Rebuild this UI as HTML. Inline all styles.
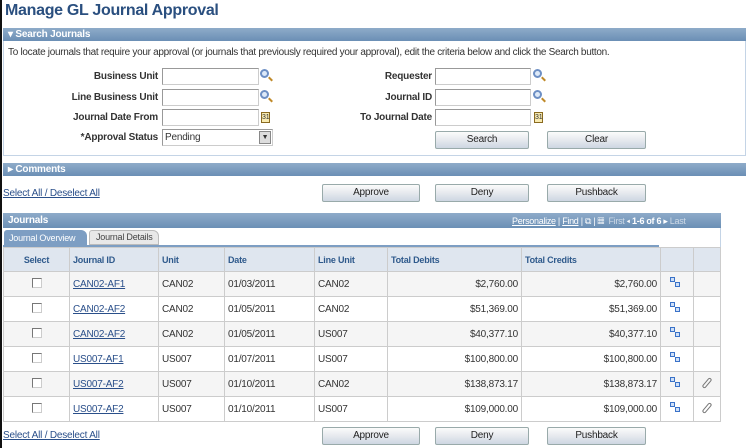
<!DOCTYPE html>
<html><head><style>
*{margin:0;padding:0;box-sizing:border-box}
body{width:746px;height:448px;background:#fff;font-family:"Liberation Sans",Arial,sans-serif;font-size:10px;letter-spacing:-0.2px;color:#333;position:relative;overflow:hidden}
.a{position:absolute;white-space:nowrap}
.bar{position:absolute;height:13px;background:linear-gradient(#8eabc9,#6b8fb5);color:#fff;font-weight:bold;font-size:10px;line-height:13px;padding-left:5px}
.lbl{position:absolute;font-weight:bold;color:#333;text-align:right;font-size:10px;white-space:nowrap}
.inp{position:absolute;height:17px;border:1px solid #999;border-right-color:#ccc;border-bottom-color:#ccc;background:#fff}
.btn{position:absolute;height:18px;border:1px solid #9aa;border-radius:2px;background:linear-gradient(#fbfbfb,#e6e9ee 50%,#cdd6e2);text-align:center;line-height:16px;font-size:10px;color:#222}
.lk{position:absolute;color:#2a4f8a;text-decoration:underline;font-size:10px;white-space:nowrap}
.mag{position:absolute;width:9px;height:9px;border:2px solid #6d8fc4;border-radius:50%;background:#dde9f8}
.mag:after{content:"";position:absolute;left:6px;top:7px;width:5px;height:2px;background:#c08a2a;transform:rotate(45deg)}
.cal{position:absolute;width:9px;height:11px;border:1px solid #8a6a20;background:#f8eab0;font-size:7px;line-height:9px;text-align:center;color:#333}
table{position:absolute;left:3px;top:247px;border-collapse:collapse;width:718px}
td{border:1px solid #ccc;height:25px;padding:0 3px;font-size:10px;color:#333}
th{border:1px solid #ccc;height:24px;background:#dfe6ef;color:#2f5a8c;font-size:9px;text-align:left;padding:0 3px}
tr.g td{background:#f5f5f5}
td a{color:#2a4f8a;text-decoration:underline}
.cb{display:inline-block;width:10px;height:10px;border:1px solid #777;border-right-color:#ccc;border-bottom-color:#ccc;background:#fff}
.r{text-align:right}
.ic{display:inline-block;position:relative;width:12px;height:12px;margin-left:6px}
.ic i{position:absolute;border:1px solid #3a72c8;background:#cfe0f8;width:5px;height:5px}
.clip{display:inline-block;width:4px;height:12px;border:1px solid #777;border-radius:3px;transform:rotate(40deg)}
</style></head><body>
<div class="a" style="left:0;top:0;width:2px;height:448px;background:#111"></div>
<div class="a" style="left:5px;top:2px;font-size:16px;letter-spacing:-0.3px;font-weight:bold;color:#2a4f7f">Manage GL Journal Approval</div>

<div class="a" style="left:3px;top:28px;width:743px;height:128px;border:1px solid #c4d4e6"></div>
<div class="bar" style="left:3px;top:28px;width:743px">▾ Search Journals</div>
<div class="a" style="left:8px;top:47px;letter-spacing:-0.3px">To locate journals that require your approval (or journals that previously required your approval), edit the criteria below and click the Search button.</div>

<div class="lbl" style="left:40px;top:71px;width:118px">Business Unit</div>
<div class="inp" style="left:162px;top:68px;width:97px"></div><div class="mag" style="left:260px;top:69px"></div>
<div class="lbl" style="left:40px;top:92px;width:118px">Line Business Unit</div>
<div class="inp" style="left:162px;top:89px;width:97px"></div><div class="mag" style="left:260px;top:90px"></div>
<div class="lbl" style="left:40px;top:112px;width:118px">Journal Date From</div>
<div class="inp" style="left:162px;top:109px;width:97px"></div><div class="cal" style="left:261px;top:112px">31</div>
<div class="lbl" style="left:40px;top:132px;width:118px">*Approval Status</div>
<div class="inp" style="left:162px;top:129px;width:111px;padding-left:2px;line-height:15px">Pending<span style="position:absolute;right:1px;top:1px;width:12px;height:13px;border:1px solid #888;background:#ddd;font-size:7px;text-align:center;line-height:12px">▼</span></div>

<div class="lbl" style="left:320px;top:71px;width:112px">Requester</div>
<div class="inp" style="left:435px;top:68px;width:96px"></div><div class="mag" style="left:533px;top:69px"></div>
<div class="lbl" style="left:320px;top:92px;width:112px">Journal ID</div>
<div class="inp" style="left:435px;top:89px;width:96px"></div><div class="mag" style="left:533px;top:90px"></div>
<div class="lbl" style="left:320px;top:112px;width:112px">To Journal Date</div>
<div class="inp" style="left:435px;top:109px;width:96px"></div><div class="cal" style="left:534px;top:112px">31</div>
<div class="btn" style="left:435px;top:131px;width:94px">Search</div>
<div class="btn" style="left:547px;top:131px;width:99px">Clear</div>

<div class="bar" style="left:3px;top:163px;width:743px">▸ Comments</div>
<div class="lk" style="left:3px;top:188px">Select All / Deselect All</div>
<div class="btn" style="left:322px;top:184px;width:98px">Approve</div>
<div class="btn" style="left:435px;top:184px;width:94px">Deny</div>
<div class="btn" style="left:547px;top:184px;width:99px">Pushback</div>

<div class="bar" style="left:3px;top:213px;width:718px;height:15px;line-height:15px">Journals</div>
<div class="a" style="left:512px;top:216px;color:#fff;font-size:9px;letter-spacing:-0.3px"><u>Personalize</u> | <u>Find</u> | ⧉ | ▦ &nbsp;<span style="color:#cdd9e6">First</span> ◂ <b>1-6 of 6</b> ▸ <span style="color:#cdd9e6">Last</span></div>
<div class="a" style="left:720px;top:228px;width:1px;height:20px;background:#c4d4e6"></div>
<div class="a" style="left:4px;top:230px;width:83px;height:16px;background:#7d9ec3;color:#fff;font-size:9px;line-height:16px;padding-left:5px;border-radius:3px 6px 0 0">Journal Overview</div>
<div class="a" style="left:89px;top:230px;width:70px;height:15px;background:#e8e8e8;border:1px solid #bbb;color:#444;font-size:9px;line-height:13px;padding-left:6px;border-radius:3px 6px 0 0">Journal Details</div>
<div class="a" style="left:3px;top:245px;width:656px;height:3px;background:#7d9ec3"></div>

<table>
<tr><th style="width:66px;text-align:center">Select</th><th style="width:89px">Journal ID</th><th style="width:66px">Unit</th><th style="width:90px">Date</th><th style="width:73px">Line Unit</th><th style="width:134px">Total Debits</th><th style="width:139px">Total Credits</th><th style="width:33px"></th><th></th></tr>
<tr class="g"><td style="text-align:center"><span class="cb"></span></td><td><a>CAN02-AF1</a></td><td>CAN02</td><td>01/03/2011</td><td>CAN02</td><td class="r">$2,760.00</td><td class="r">$2,760.00</td><td><span class="ic"><i style="left:0;top:0"></i><i style="left:5px;top:5px"></i></span></td><td></td></tr>
<tr><td style="text-align:center"><span class="cb"></span></td><td><a>CAN02-AF2</a></td><td>CAN02</td><td>01/05/2011</td><td>CAN02</td><td class="r">$51,369.00</td><td class="r">$51,369.00</td><td><span class="ic"><i style="left:0;top:0"></i><i style="left:5px;top:5px"></i></span></td><td></td></tr>
<tr class="g"><td style="text-align:center"><span class="cb"></span></td><td><a>CAN02-AF2</a></td><td>CAN02</td><td>01/05/2011</td><td>US007</td><td class="r">$40,377.10</td><td class="r">$40,377.10</td><td><span class="ic"><i style="left:0;top:0"></i><i style="left:5px;top:5px"></i></span></td><td></td></tr>
<tr><td style="text-align:center"><span class="cb"></span></td><td><a>US007-AF1</a></td><td>US007</td><td>01/07/2011</td><td>US007</td><td class="r">$100,800.00</td><td class="r">$100,800.00</td><td><span class="ic"><i style="left:0;top:0"></i><i style="left:5px;top:5px"></i></span></td><td></td></tr>
<tr class="g"><td style="text-align:center"><span class="cb"></span></td><td><a>US007-AF2</a></td><td>US007</td><td>01/10/2011</td><td>CAN02</td><td class="r">$138,873.17</td><td class="r">$138,873.17</td><td><span class="ic"><i style="left:0;top:0"></i><i style="left:5px;top:5px"></i></span></td><td style="text-align:center"><span class="clip"></span></td></tr>
<tr><td style="text-align:center"><span class="cb"></span></td><td><a>US007-AF2</a></td><td>US007</td><td>01/10/2011</td><td>US007</td><td class="r">$109,000.00</td><td class="r">$109,000.00</td><td><span class="ic"><i style="left:0;top:0"></i><i style="left:5px;top:5px"></i></span></td><td style="text-align:center"><span class="clip"></span></td></tr>
</table>

<div class="lk" style="left:3px;top:430px">Select All / Deselect All</div>
<div class="btn" style="left:322px;top:427px;width:98px">Approve</div>
<div class="btn" style="left:435px;top:427px;width:94px">Deny</div>
<div class="btn" style="left:547px;top:427px;width:99px">Pushback</div>
</body></html>
